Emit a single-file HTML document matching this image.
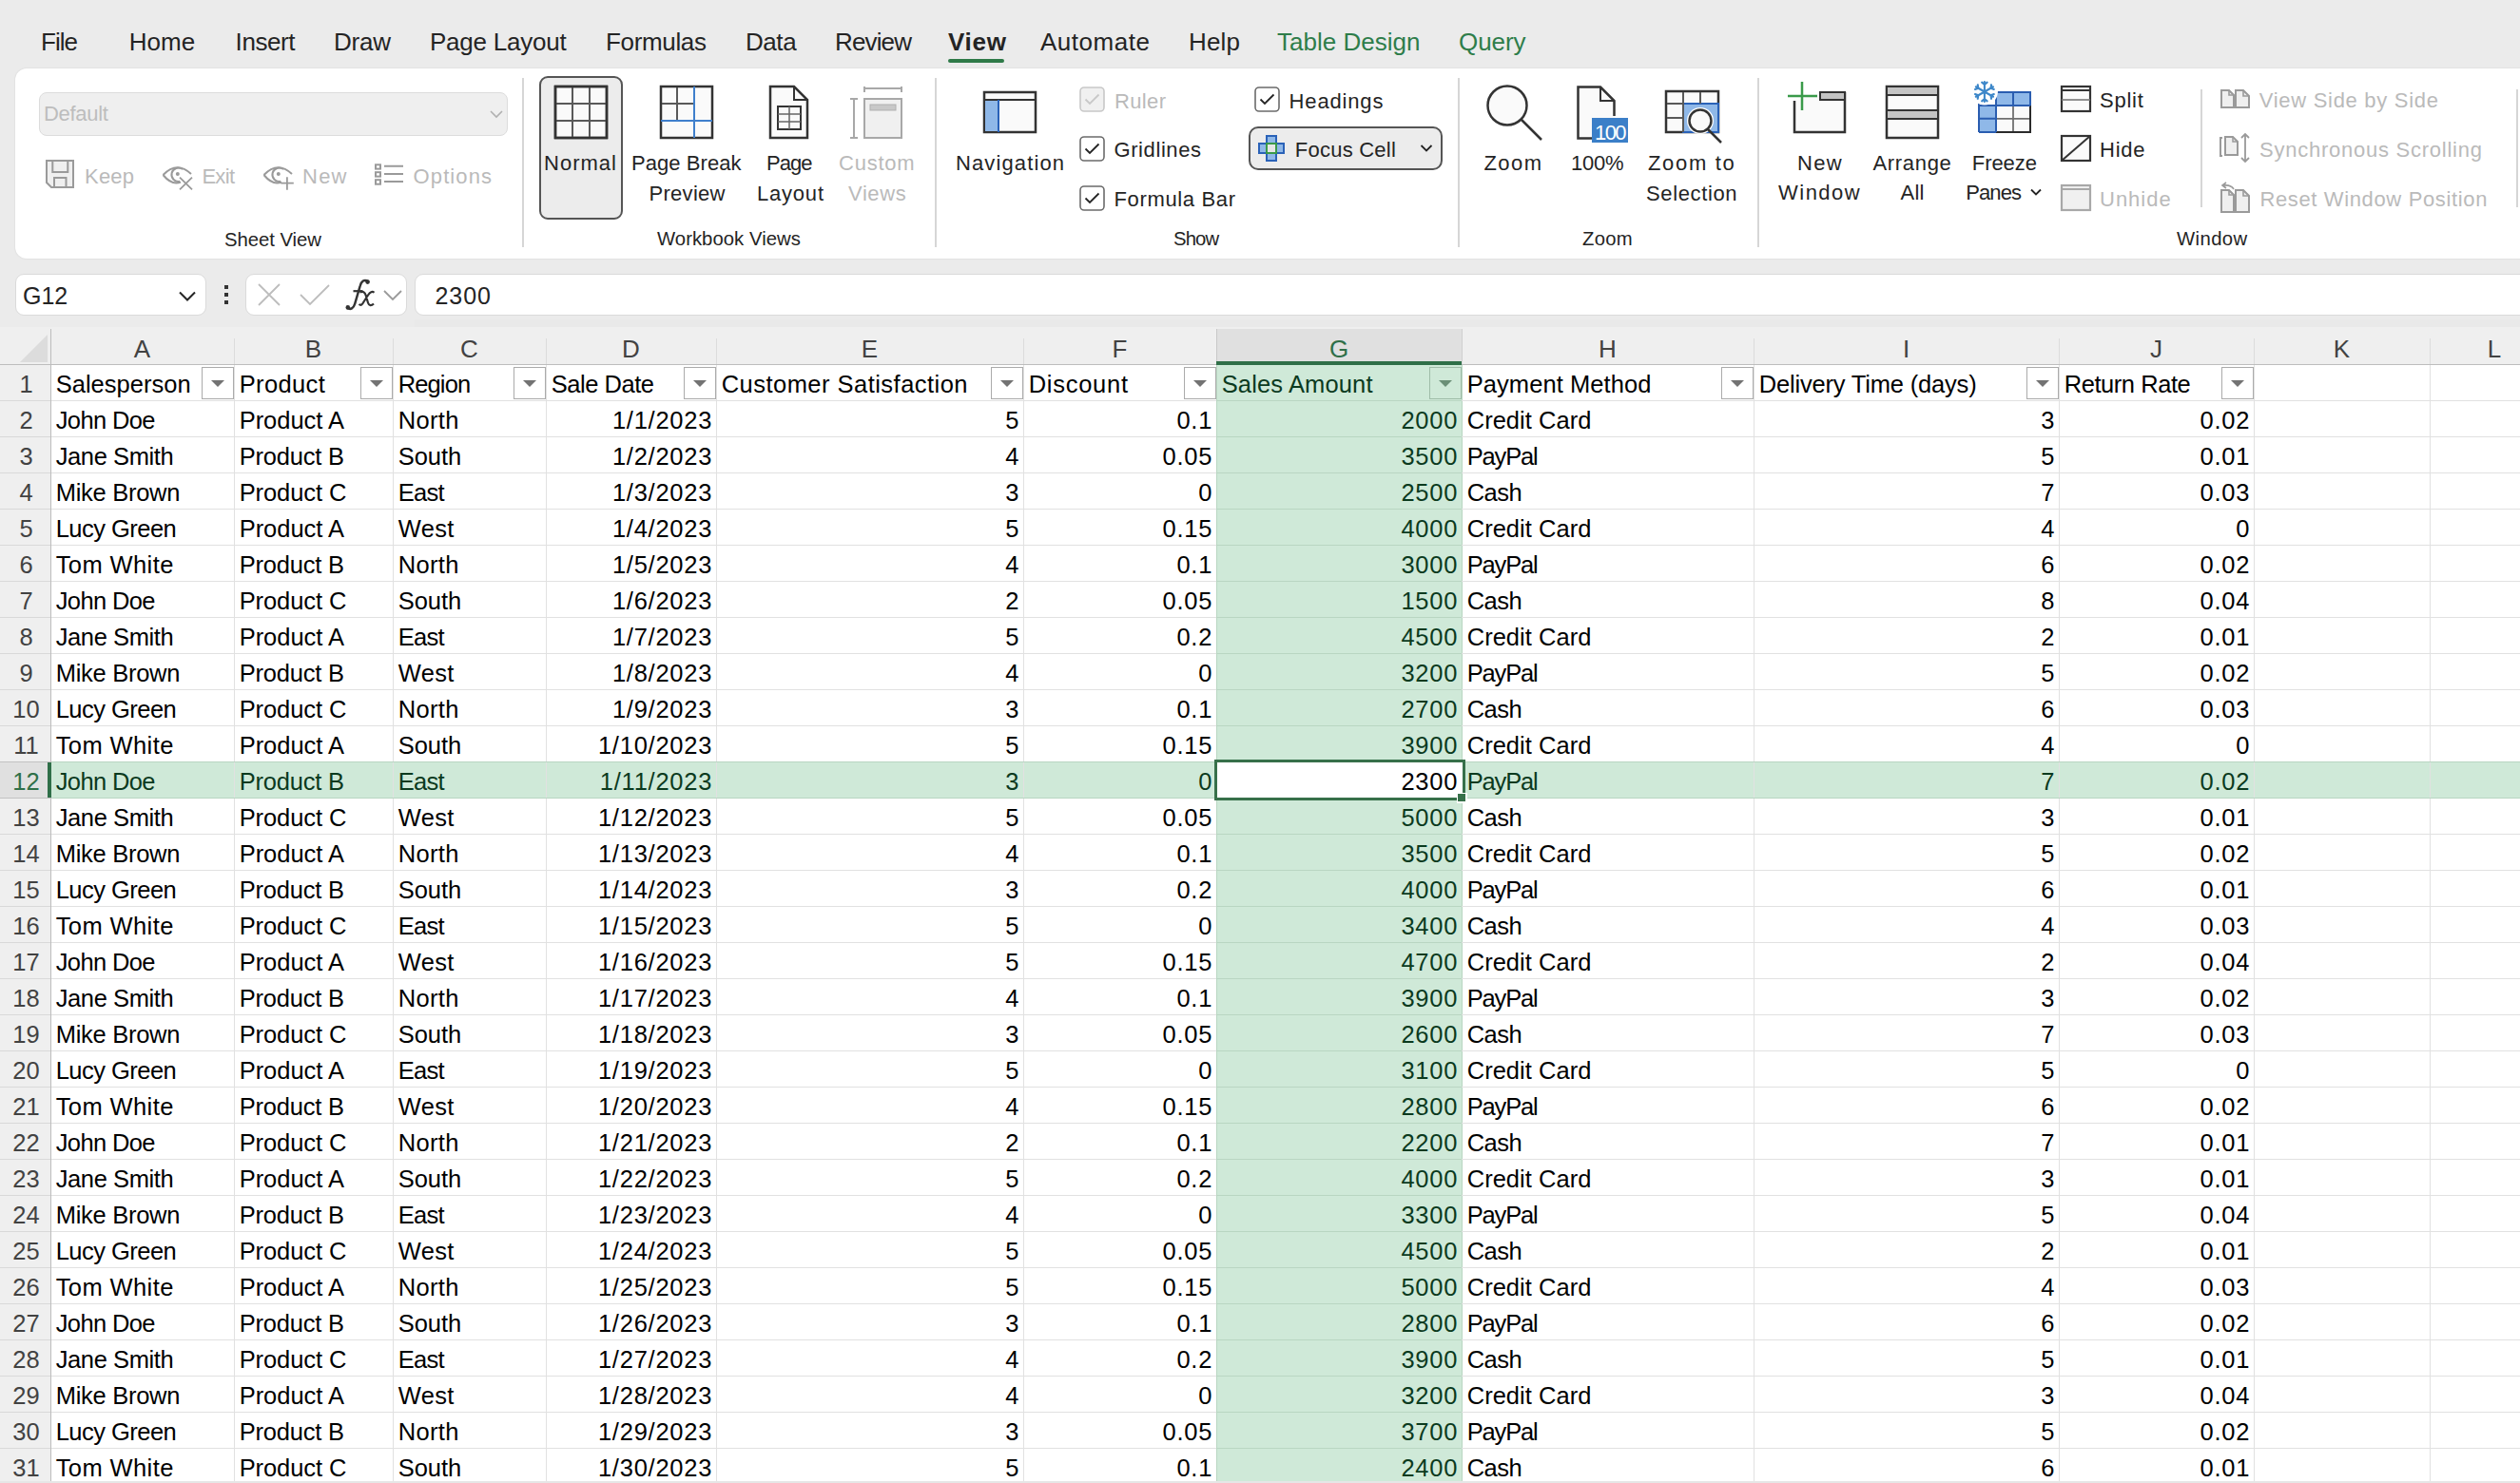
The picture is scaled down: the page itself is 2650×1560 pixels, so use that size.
<!DOCTYPE html>
<html><head><meta charset="utf-8"><style>
html,body{margin:0;padding:0;}
body{width:2650px;height:1560px;overflow:hidden;position:relative;background:#ebebeb;font-family:"Liberation Sans",sans-serif;}
.t{position:absolute;white-space:nowrap;line-height:1;}
svg{overflow:visible;}
</style></head><body>
<div class="t" style="left:43.00px;top:31.03px;font-size:26px;color:#242424;letter-spacing:-0.966px;">File</div><div class="t" style="left:135.70px;top:31.03px;font-size:26px;color:#242424;letter-spacing:0.081px;">Home</div><div class="t" style="left:247.60px;top:31.03px;font-size:26px;color:#242424;letter-spacing:-0.405px;">Insert</div><div class="t" style="left:351.00px;top:31.03px;font-size:26px;color:#242424;letter-spacing:-0.224px;">Draw</div><div class="t" style="left:452.00px;top:31.03px;font-size:26px;color:#242424;letter-spacing:-0.241px;">Page Layout</div><div class="t" style="left:637.00px;top:31.03px;font-size:26px;color:#242424;letter-spacing:-0.337px;">Formulas</div><div class="t" style="left:784.00px;top:31.03px;font-size:26px;color:#242424;letter-spacing:-0.440px;">Data</div><div class="t" style="left:878.00px;top:31.03px;font-size:26px;color:#242424;letter-spacing:-0.850px;">Review</div><div class="t" style="left:997.00px;top:31.03px;font-size:26px;color:#242424;letter-spacing:0.704px;font-weight:bold;">View</div><div class="t" style="left:1094.00px;top:31.03px;font-size:26px;color:#242424;letter-spacing:0.530px;">Automate</div><div class="t" style="left:1250.00px;top:31.03px;font-size:26px;color:#242424;letter-spacing:0.175px;">Help</div><div class="t" style="left:1343.00px;top:31.03px;font-size:26px;color:#2e7d4a;letter-spacing:0.017px;">Table Design</div><div class="t" style="left:1534.00px;top:31.03px;font-size:26px;color:#2e7d4a;letter-spacing:-0.076px;">Query</div><div style="position:absolute;left:997px;top:62px;width:59px;height:4px;background:#2f7a48;border-radius:2px;"></div><div style="position:absolute;left:16px;top:72px;width:2700px;height:200px;background:#fff;border-radius:12px;box-shadow:0 0 2px rgba(0,0,0,0.12);"></div><div style="position:absolute;left:549px;top:82px;width:2px;height:178px;background:#d6d6d6;"></div><div style="position:absolute;left:983px;top:82px;width:2px;height:178px;background:#d6d6d6;"></div><div style="position:absolute;left:1533px;top:82px;width:2px;height:178px;background:#d6d6d6;"></div><div style="position:absolute;left:1848px;top:82px;width:2px;height:178px;background:#d6d6d6;"></div><div style="position:absolute;left:2646px;top:94px;width:2px;height:124px;background:#d6d6d6;"></div><div style="position:absolute;left:2314px;top:94px;width:2px;height:124px;background:#d6d6d6;"></div><div class="t" style="left:236.00px;top:241.85px;font-size:20.3px;color:#242424;letter-spacing:-0.036px;">Sheet View</div><div class="t" style="left:691.00px;top:240.85px;font-size:20.3px;color:#242424;letter-spacing:0.043px;">Workbook Views</div><div class="t" style="left:1234.00px;top:240.85px;font-size:20.3px;color:#242424;letter-spacing:-0.861px;">Show</div><div class="t" style="left:1664.00px;top:241.25px;font-size:20.3px;color:#242424;letter-spacing:0.269px;">Zoom</div><div class="t" style="left:2289.00px;top:241.15px;font-size:20.3px;color:#242424;letter-spacing:0.400px;">Window</div><div style="position:absolute;left:41px;top:97px;width:493px;height:46px;background:#efefef;border:1px solid #dcdcdc;border-radius:8px;box-sizing:border-box;"></div><div class="t" style="left:46.00px;top:109.41px;font-size:22px;color:#bdbdbd;letter-spacing:-0.290px;">Default</div><svg style="position:absolute;left:514px;top:114px;" width="16" height="12" viewBox="0 0 16 12"><path d="M2 3 L8 9 L14 3" fill="none" stroke="#b0b0b0" stroke-width="1.6"/></svg><svg style="position:absolute;left:46px;top:166px;" width="34" height="34" viewBox="0 0 34 34"><path d="M3 3 H31 V31 H8 L3 26 Z" fill="#efefef" stroke="#9a9a9a" stroke-width="2"/><rect x="9.3" y="3" width="16" height="12" fill="none" stroke="#9a9a9a" stroke-width="2"/><rect x="11" y="21" width="12.5" height="10" fill="none" stroke="#9a9a9a" stroke-width="2"/></svg><div class="t" style="left:89.00px;top:175.01px;font-size:22px;color:#bababa;letter-spacing:0.206px;">Keep</div><svg style="position:absolute;left:170px;top:168px;" width="34" height="32" viewBox="0 0 34 32"><path d="M1.5 16 Q16 1 31 15" fill="none" stroke="#9a9a9a" stroke-width="2"/><path d="M1.5 16 Q11 27.5 20 23.5" fill="none" stroke="#9a9a9a" stroke-width="2"/><path d="M22 10 A7.2 7.2 0 1 0 19 22.8" fill="none" stroke="#9a9a9a" stroke-width="2"/><circle cx="16.8" cy="15" r="2" fill="#9a9a9a"/><path d="M19 18.6 L32 31.3 M32 18.6 L19 31.3" stroke="#9a9a9a" stroke-width="1.8"/></svg><div class="t" style="left:212.40px;top:175.01px;font-size:22px;color:#bababa;letter-spacing:-0.692px;">Exit</div><svg style="position:absolute;left:276px;top:168px;" width="34" height="32" viewBox="0 0 34 32"><path d="M1.5 16 Q16 1 31 15" fill="none" stroke="#9a9a9a" stroke-width="2"/><path d="M1.5 16 Q11 27.5 20 23.5" fill="none" stroke="#9a9a9a" stroke-width="2"/><path d="M22 10 A7.2 7.2 0 1 0 19 22.8" fill="none" stroke="#9a9a9a" stroke-width="2"/><circle cx="16.8" cy="15" r="2" fill="#9a9a9a"/><path d="M25.9 18.2 V31.7 M19.3 24.7 H32.8" stroke="#9a9a9a" stroke-width="1.8"/></svg><div class="t" style="left:318.00px;top:175.01px;font-size:22px;color:#bababa;letter-spacing:1.244px;">New</div><svg style="position:absolute;left:393px;top:170px;" width="34" height="28" viewBox="0 0 34 28"><rect x="2" y="3.3" width="5" height="4.3" fill="none" stroke="#9a9a9a" stroke-width="2"/><rect x="2" y="11.2" width="5" height="4.4" fill="none" stroke="#9a9a9a" stroke-width="2"/><rect x="2" y="19.2" width="5" height="4.5" fill="none" stroke="#9a9a9a" stroke-width="2"/><path d="M11 4.8 H31 M11 13 H31 M11 21 H31" stroke="#9a9a9a" stroke-width="2"/></svg><div class="t" style="left:434.60px;top:175.01px;font-size:22px;color:#bababa;letter-spacing:1.097px;">Options</div><div style="position:absolute;left:567px;top:80px;width:88px;height:151px;background:#ececec;border:2px solid #555;border-radius:9px;box-sizing:border-box;"></div><svg style="position:absolute;left:582px;top:89px;" width="58" height="58" viewBox="0 0 58 58"><rect x="2" y="2" width="54" height="54" fill="#fafafa" stroke="#333" stroke-width="2.5"/><path d="M20 3 V55 M38 3 V55 M3 20 H55 M3 38 H55" stroke="#595959" stroke-width="2"/><rect x="2" y="2" width="54" height="54" fill="none" stroke="#333" stroke-width="2.5"/></svg><div class="t" style="left:572.00px;top:160.91px;font-size:22px;color:#242424;letter-spacing:1.020px;">Normal</div><svg style="position:absolute;left:693px;top:89px;" width="58" height="58" viewBox="0 0 58 58"><rect x="2" y="2" width="54" height="54" fill="#fafafa" stroke="#333" stroke-width="2.5"/><path d="M19 3 V38 M3 20 H37" stroke="#595959" stroke-width="2"/><path d="M37 2 V56 M2 38 H56" stroke="#3f7fcc" stroke-width="2"/></svg><div class="t" style="left:664.00px;top:160.91px;font-size:22px;color:#242424;letter-spacing:0.059px;">Page Break</div><div class="t" style="left:682.50px;top:193.01px;font-size:22px;color:#242424;letter-spacing:0.292px;">Preview</div><svg style="position:absolute;left:808px;top:89px;" width="44" height="58" viewBox="0 0 44 58"><path d="M2 2 H27 L41 16 V56 H2 Z" fill="#fafafa" stroke="#333" stroke-width="2.5"/><path d="M27 2 V16 H41" fill="none" stroke="#333" stroke-width="2"/><rect x="10" y="23" width="24" height="24" fill="none" stroke="#333" stroke-width="2"/><path d="M22 23 V47 M10 31 H34 M10 39 H34" stroke="#666" stroke-width="1.5"/></svg><div class="t" style="left:806.00px;top:160.91px;font-size:22px;color:#242424;letter-spacing:-0.961px;">Page</div><div class="t" style="left:796.00px;top:193.01px;font-size:22px;color:#242424;letter-spacing:0.789px;">Layout</div><svg style="position:absolute;left:892px;top:89px;" width="60" height="58" viewBox="0 0 60 58"><path d="M17 2 V8 M17 4 H56 M56 2 V8" stroke="#a8a8a8" stroke-width="2"/><path d="M2 15 H10 M6 15 V56 M2 56 H10" stroke="#a8a8a8" stroke-width="2"/><rect x="17" y="15" width="39" height="41" fill="#f0f0f0" stroke="#a8a8a8" stroke-width="2"/><rect x="23" y="21" width="27" height="6" fill="#c8c8c8" stroke="#b0b0b0" stroke-width="1"/></svg><div class="t" style="left:882.00px;top:160.91px;font-size:22px;color:#bababa;letter-spacing:0.760px;">Custom</div><div class="t" style="left:892.00px;top:193.01px;font-size:22px;color:#bababa;letter-spacing:0.603px;">Views</div><svg style="position:absolute;left:1033px;top:95px;" width="58" height="46" viewBox="0 0 58 46"><rect x="2" y="2" width="54" height="42" fill="#fafafa" stroke="#333" stroke-width="2.5"/><rect x="3" y="10" width="14" height="33" fill="#8fb8e8"/><path d="M2 10 H56" stroke="#333" stroke-width="2"/><path d="M17 10 V44" stroke="#2a62b8" stroke-width="2"/></svg><div class="t" style="left:1005.00px;top:160.81px;font-size:22px;color:#242424;letter-spacing:1.116px;">Navigation</div><svg style="position:absolute;left:1134.5px;top:90.5px;" width="27" height="27" viewBox="0 0 27 27"><rect x="1" y="1" width="25" height="25" rx="4" fill="#f0f0f0" stroke="#c8c8c8" stroke-width="1.6"/><path d="M6.5 13.5 L11 18 L20.5 8.5" fill="none" stroke="#c8c8c8" stroke-width="1.8"/></svg><div class="t" style="left:1172.00px;top:95.91px;font-size:22px;color:#bababa;letter-spacing:0.356px;">Ruler</div><svg style="position:absolute;left:1134.5px;top:142.5px;" width="27" height="27" viewBox="0 0 27 27"><rect x="1" y="1" width="25" height="25" rx="4" fill="#fff" stroke="#6b6b6b" stroke-width="1.6"/><path d="M6.5 13.5 L11 18 L20.5 8.5" fill="none" stroke="#242424" stroke-width="1.8"/></svg><div class="t" style="left:1171.50px;top:147.11px;font-size:22px;color:#242424;letter-spacing:0.586px;">Gridlines</div><svg style="position:absolute;left:1134.5px;top:195px;" width="27" height="27" viewBox="0 0 27 27"><rect x="1" y="1" width="25" height="25" rx="4" fill="#fff" stroke="#6b6b6b" stroke-width="1.6"/><path d="M6.5 13.5 L11 18 L20.5 8.5" fill="none" stroke="#242424" stroke-width="1.8"/></svg><div class="t" style="left:1171.50px;top:199.41px;font-size:22px;color:#242424;letter-spacing:0.646px;">Formula Bar</div><svg style="position:absolute;left:1318.5px;top:90.5px;" width="27" height="27" viewBox="0 0 27 27"><rect x="1" y="1" width="25" height="25" rx="4" fill="#fff" stroke="#6b6b6b" stroke-width="1.6"/><path d="M6.5 13.5 L11 18 L20.5 8.5" fill="none" stroke="#242424" stroke-width="1.8"/></svg><div class="t" style="left:1355.60px;top:95.91px;font-size:22px;color:#242424;letter-spacing:0.835px;">Headings</div><div style="position:absolute;left:1313px;top:133px;width:204px;height:46px;background:#ececec;border:2px solid #555;border-radius:10px;box-sizing:border-box;"></div><svg style="position:absolute;left:1322px;top:141px;" width="30" height="30" viewBox="0 0 30 30"><path d="M10 2 H20 V10 H28 V20 H20 V28 H10 V20 H2 V10 H10 Z" fill="#8fb8e8" stroke="#2a62b8" stroke-width="2"/><rect x="10" y="10" width="10" height="10" fill="#e6e6e6" stroke="#3a9a4a" stroke-width="2"/></svg><div class="t" style="left:1361.80px;top:147.11px;font-size:22px;color:#242424;letter-spacing:0.231px;">Focus Cell</div><svg style="position:absolute;left:1492px;top:150px;" width="16" height="12" viewBox="0 0 16 12"><path d="M2.5 3 L8 8.5 L13.5 3" fill="none" stroke="#242424" stroke-width="1.8"/></svg><svg style="position:absolute;left:1560px;top:86px;" width="66" height="66" viewBox="0 0 66 66"><circle cx="25" cy="25" r="20.5" fill="#fafafa" stroke="#333" stroke-width="2.5"/><path d="M40 40 L61 61" stroke="#333" stroke-width="2.5"/></svg><div class="t" style="left:1560.50px;top:161.21px;font-size:22px;color:#242424;letter-spacing:1.421px;">Zoom</div><svg style="position:absolute;left:1656px;top:88px;" width="60" height="64" viewBox="0 0 60 64"><path d="M3 3 H27 L42 18 V58 H3 Z" fill="#fafafa" stroke="none"/><path d="M19 57.5 H3.5 V3.5 H27 L41.5 18 V34" fill="none" stroke="#333" stroke-width="2.5"/><path d="M27 3 V18 H42" fill="none" stroke="#333" stroke-width="2"/><rect x="18" y="36" width="38" height="26" fill="#3b7fc8"/><text x="37" y="58.5" font-family="Liberation Sans" font-size="22" fill="#fff" text-anchor="middle" letter-spacing="-1.5">100</text></svg><div class="t" style="left:1652.00px;top:161.21px;font-size:22px;color:#242424;letter-spacing:-0.256px;">100%</div><svg style="position:absolute;left:1750px;top:94px;" width="66" height="58" viewBox="0 0 66 58"><rect x="2" y="2" width="55" height="43" fill="#fafafa" stroke="#333" stroke-width="2.5"/><rect x="20" y="15" width="37" height="30" fill="#8fb8e8" stroke="#2a62b8" stroke-width="2"/><path d="M20 3 V45 M38 3 V15 M3 15 H20 M3 30 H20" stroke="#595959" stroke-width="2"/><circle cx="38" cy="33" r="14" fill="#fff"/><circle cx="38" cy="33" r="11.5" fill="#fafafa" stroke="#333" stroke-width="2.5"/><path d="M46 42 L60 56" stroke="#333" stroke-width="2.5"/></svg><div class="t" style="left:1733.00px;top:161.21px;font-size:22px;color:#242424;letter-spacing:1.684px;">Zoom to</div><div class="t" style="left:1731.00px;top:193.11px;font-size:22px;color:#242424;letter-spacing:0.624px;">Selection</div><svg style="position:absolute;left:1878px;top:84px;" width="66" height="58" viewBox="0 0 66 58"><path d="M9 22 V55 H62 V14 H36" fill="#fafafa" stroke="#333" stroke-width="2.5"/><rect x="36" y="13" width="26" height="8" fill="#c4c4c4" stroke="#333" stroke-width="2"/><path d="M17 2 V32 M2 17 H33" stroke="#3a9a4a" stroke-width="2.5"/></svg><div class="t" style="left:1890.00px;top:160.81px;font-size:22px;color:#242424;letter-spacing:1.344px;">New</div><div class="t" style="left:1870.00px;top:192.41px;font-size:22px;color:#242424;letter-spacing:1.490px;">Window</div><svg style="position:absolute;left:1982px;top:89px;" width="58" height="58" viewBox="0 0 58 58"><rect x="2" y="2" width="54" height="54" fill="#fafafa" stroke="#333" stroke-width="2.5"/><rect x="3" y="3" width="52" height="8" fill="#c4c4c4"/><path d="M2 11 H56" stroke="#333" stroke-width="2"/><rect x="3" y="27" width="52" height="9" fill="#c4c4c4"/><path d="M2 27 H56 M2 36 H56" stroke="#333" stroke-width="2"/></svg><div class="t" style="left:1969.40px;top:160.81px;font-size:22px;color:#242424;letter-spacing:0.688px;">Arrange</div><div class="t" style="left:1998.60px;top:192.41px;font-size:22px;color:#242424;letter-spacing:0.175px;">All</div><svg style="position:absolute;left:2074px;top:85px;" width="64" height="58" viewBox="0 0 64 58"><rect x="7" y="12" width="54" height="42" fill="#fafafa"/><path d="M7 26 H25 V12 H61 V26 H25 V54 H7 Z" fill="#8fb8e8"/><path d="M43 26 V54 M25 39.8 H61" stroke="#707070" stroke-width="1.8"/><path d="M61 26 V54 H25" fill="none" stroke="#2b2b2b" stroke-width="2"/><path d="M7 54 V12 H61 V26 M7 26 H61 M25 12 V54 M43 12 V26 M7 39.8 H25 M7 54 H25" fill="none" stroke="#2a5db0" stroke-width="2"/><circle cx="12.9" cy="11.5" r="14" fill="#fff"/><path d="M12.90 11.50 L12.90 1.00 M12.90 3.94 L10.14 1.63 M12.90 3.94 L15.66 1.63 M12.90 11.50 L21.99 6.25 M19.45 7.72 L20.07 4.17 M19.45 7.72 L22.83 8.95 M12.90 11.50 L21.99 16.75 M19.45 15.28 L22.83 14.05 M19.45 15.28 L20.07 18.83 M12.90 11.50 L12.90 22.00 M12.90 19.06 L15.66 21.37 M12.90 19.06 L10.14 21.37 M12.90 11.50 L3.81 16.75 M6.35 15.28 L5.73 18.83 M6.35 15.28 L2.97 14.05 M12.90 11.50 L3.81 6.25 M6.35 7.72 L2.97 8.95 M6.35 7.72 L5.73 4.17" stroke="#3d87c9" stroke-width="2.1" stroke-linecap="round"/></svg><div class="t" style="left:2073.80px;top:160.81px;font-size:22px;color:#242424;letter-spacing:-0.075px;">Freeze</div><div class="t" style="left:2067.30px;top:192.41px;font-size:22px;color:#242424;letter-spacing:-0.921px;">Panes</div><svg style="position:absolute;left:2134px;top:197px;" width="14" height="11" viewBox="0 0 14 11"><path d="M2 2.5 L7 7.5 L12 2.5" fill="none" stroke="#242424" stroke-width="1.8"/></svg><svg style="position:absolute;left:2166px;top:89px;" width="34" height="30" viewBox="0 0 34 30"><rect x="2" y="2" width="30" height="26" fill="#fafafa" stroke="#333" stroke-width="2.2"/><path d="M2 6 H32" stroke="#333" stroke-width="2"/><path d="M2 16 H32" stroke="#777" stroke-width="1.6"/></svg><div class="t" style="left:2208.00px;top:95.21px;font-size:22px;color:#242424;letter-spacing:0.750px;">Split</div><svg style="position:absolute;left:2166px;top:141px;" width="34" height="30" viewBox="0 0 34 30"><rect x="2" y="2" width="30" height="26" fill="#fafafa" stroke="#333" stroke-width="2.2"/><path d="M2 28 L32 2" stroke="#333" stroke-width="2"/></svg><div class="t" style="left:2208.00px;top:146.91px;font-size:22px;color:#242424;letter-spacing:0.784px;">Hide</div><svg style="position:absolute;left:2166px;top:193px;" width="34" height="30" viewBox="0 0 34 30"><rect x="2" y="2" width="30" height="26" fill="#f0f0f0" stroke="#a8a8a8" stroke-width="2.2"/><path d="M2 6 H32" stroke="#a8a8a8" stroke-width="2"/></svg><div class="t" style="left:2208.00px;top:199.11px;font-size:22px;color:#bababa;letter-spacing:0.996px;">Unhide</div><svg style="position:absolute;left:2334px;top:93px;" width="34" height="22" viewBox="0 0 34 22"><path d="M2 2 H10 L15 7 V20 H2 Z M17 2 H25 L31 8 V20 H17 Z" fill="#efefef" stroke="#9a9a9a" stroke-width="2"/><path d="M10 2 V7 H15 M25 2 V8 H31" fill="none" stroke="#9a9a9a" stroke-width="1.6"/></svg><div class="t" style="left:2375.70px;top:95.31px;font-size:22px;color:#bababa;letter-spacing:0.711px;">View Side by Side</div><svg style="position:absolute;left:2334px;top:139px;" width="34" height="34" viewBox="0 0 34 34"><path d="M3 6 H1 V25 H3" fill="none" stroke="#9a9a9a" stroke-width="2"/><path d="M6 5 H14 L19 10 V24 H6 Z" fill="#efefef" stroke="#9a9a9a" stroke-width="2"/><path d="M14 5 V10 H19" fill="none" stroke="#9a9a9a" stroke-width="1.5"/><path d="M27 2 V31 M23 6 L27 2 L31 6 M23 27 L27 31 L31 27" fill="none" stroke="#9a9a9a" stroke-width="1.8"/></svg><div class="t" style="left:2376.00px;top:147.41px;font-size:22px;color:#bababa;letter-spacing:0.755px;">Synchronous Scrolling</div><svg style="position:absolute;left:2334px;top:191px;" width="34" height="34" viewBox="0 0 34 34"><path d="M2 9 H10 L15 14 V32 H2 Z M17 9 H25 L31 15 V32 H17 Z" fill="#efefef" stroke="#9a9a9a" stroke-width="2"/><path d="M10 9 V14 H15 M25 9 V15 H31" fill="none" stroke="#9a9a9a" stroke-width="1.6"/><path d="M15 8 Q12 3 4 4 M7 1 L3 4 L7 7" fill="none" stroke="#9a9a9a" stroke-width="1.6"/></svg><div class="t" style="left:2376.40px;top:198.81px;font-size:22px;color:#bababa;letter-spacing:0.639px;">Reset Window Position</div><div style="position:absolute;left:16px;top:288px;width:201px;height:44px;background:#fff;border:1px solid #dadada;border-radius:9px;box-sizing:border-box;"></div><div class="t" style="left:24.00px;top:298.88px;font-size:25px;color:#242424;">G12</div><svg style="position:absolute;left:186px;top:304px;" width="22" height="16" viewBox="0 0 22 16"><path d="M3 3.5 L11 11.5 L19 3.5" fill="none" stroke="#242424" stroke-width="2"/></svg><div style="position:absolute;left:236px;top:300px;width:4px;height:4px;background:#333;"></div><div style="position:absolute;left:236px;top:308px;width:4px;height:4px;background:#333;"></div><div style="position:absolute;left:236px;top:316px;width:4px;height:4px;background:#333;"></div><div style="position:absolute;left:258px;top:288px;width:170px;height:44px;background:#fff;border:1px solid #dadada;border-radius:9px;box-sizing:border-box;"></div><svg style="position:absolute;left:270px;top:297px;" width="26" height="26" viewBox="0 0 26 26"><path d="M2 2 L24 24 M24 2 L2 24" stroke="#bdbdbd" stroke-width="1.8"/></svg><svg style="position:absolute;left:314px;top:297px;" width="34" height="26" viewBox="0 0 34 26"><path d="M2 13 L12 23 L32 3" fill="none" stroke="#bdbdbd" stroke-width="1.8"/></svg><svg style="position:absolute;left:362px;top:292px;" width="34" height="36" viewBox="0 0 34 36"><path d="M25 3.8 C21 1.6 18 3.6 16.6 9 L11.2 27.5 C9.8 32.5 6.5 34 3.5 32" fill="none" stroke="#333" stroke-width="2.5"/><circle cx="24.6" cy="4.6" r="2.3" fill="#333"/><circle cx="3.8" cy="31.4" r="2.3" fill="#333"/><path d="M9.5 14.2 H19.5" stroke="#333" stroke-width="2.2"/><path d="M16.5 15.5 C19.5 14.2 21.8 15.2 22.8 19 L25 26.5 C26 29.8 28.5 30 31 27.5 M31.5 15.8 C29.5 14 27.2 15 25 18.5 L20.5 25.5 C19 28.3 17.5 29.8 15.5 28" fill="none" stroke="#333" stroke-width="2.2"/></svg><svg style="position:absolute;left:402px;top:303px;" width="22" height="15" viewBox="0 0 22 15"><path d="M2 3 L11 12 L20 3" fill="none" stroke="#9a9a9a" stroke-width="1.8"/></svg><div style="position:absolute;left:436px;top:288px;width:2300px;height:44px;background:#fff;border:1px solid #dadada;border-radius:9px;box-sizing:border-box;"></div><div class="t" style="left:457.50px;top:298.88px;font-size:25px;color:#242424;letter-spacing:0.961px;">2300</div><div style="position:absolute;left:53px;top:383px;width:2597px;height:1175px;background:#fff;"></div><div style="position:absolute;left:436px;top:336px;width:2650px;height:8px;background:#e9e9e9;"></div><div style="position:absolute;left:0px;top:344px;width:2650px;height:39px;background:#efefef;"></div><div style="position:absolute;left:0px;top:383px;width:53px;height:1175px;background:#efefef;"></div><svg style="position:absolute;left:21px;top:352px;" width="30" height="29" viewBox="0 0 30 29"><path d="M29 0 V29 H0 Z" fill="#dcdcdc"/></svg><div style="position:absolute;left:1279px;top:346px;width:258px;height:37px;background:#e0e0e0;"></div><div style="position:absolute;left:1279px;top:383px;width:259px;height:1175px;background:#cfe9d8;"></div><div style="position:absolute;left:53px;top:801px;width:2597px;height:38px;background:#cfe9d8;"></div><div style="position:absolute;left:0px;top:801px;width:53px;height:38px;background:#e0e0e0;"></div><div style="position:absolute;left:246px;top:356px;width:1px;height:27px;background:#dcdcdc;"></div><div style="position:absolute;left:246px;top:383px;width:1px;height:1175px;background:#e1e1e1;"></div><div style="position:absolute;left:413px;top:356px;width:1px;height:27px;background:#dcdcdc;"></div><div style="position:absolute;left:413px;top:383px;width:1px;height:1175px;background:#e1e1e1;"></div><div style="position:absolute;left:574px;top:356px;width:1px;height:27px;background:#dcdcdc;"></div><div style="position:absolute;left:574px;top:383px;width:1px;height:1175px;background:#e1e1e1;"></div><div style="position:absolute;left:753px;top:356px;width:1px;height:27px;background:#dcdcdc;"></div><div style="position:absolute;left:753px;top:383px;width:1px;height:1175px;background:#e1e1e1;"></div><div style="position:absolute;left:1076px;top:356px;width:1px;height:27px;background:#dcdcdc;"></div><div style="position:absolute;left:1076px;top:383px;width:1px;height:1175px;background:#e1e1e1;"></div><div style="position:absolute;left:1279px;top:356px;width:1px;height:27px;background:#dcdcdc;"></div><div style="position:absolute;left:1279px;top:383px;width:1px;height:1175px;background:#e1e1e1;"></div><div style="position:absolute;left:1537px;top:356px;width:1px;height:27px;background:#dcdcdc;"></div><div style="position:absolute;left:1537px;top:383px;width:1px;height:1175px;background:#e1e1e1;"></div><div style="position:absolute;left:1844px;top:356px;width:1px;height:27px;background:#dcdcdc;"></div><div style="position:absolute;left:1844px;top:383px;width:1px;height:1175px;background:#e1e1e1;"></div><div style="position:absolute;left:2165px;top:356px;width:1px;height:27px;background:#dcdcdc;"></div><div style="position:absolute;left:2165px;top:383px;width:1px;height:1175px;background:#e1e1e1;"></div><div style="position:absolute;left:2370px;top:356px;width:1px;height:27px;background:#dcdcdc;"></div><div style="position:absolute;left:2370px;top:383px;width:1px;height:1175px;background:#e1e1e1;"></div><div style="position:absolute;left:2555px;top:356px;width:1px;height:27px;background:#dcdcdc;"></div><div style="position:absolute;left:2555px;top:383px;width:1px;height:1175px;background:#e1e1e1;"></div><div style="position:absolute;left:1279px;top:383px;width:1px;height:1175px;background:#b9d6c2;"></div><div style="position:absolute;left:1537px;top:383px;width:1px;height:1175px;background:#b9d6c2;"></div><div style="position:absolute;left:0px;top:421px;width:53px;height:1px;background:#d9d9d9;"></div><div style="position:absolute;left:53px;top:421px;width:2597px;height:1px;background:#e1e1e1;"></div><div style="position:absolute;left:1279px;top:421px;width:258px;height:1px;background:#b9d6c2;"></div><div style="position:absolute;left:0px;top:459px;width:53px;height:1px;background:#d9d9d9;"></div><div style="position:absolute;left:53px;top:459px;width:2597px;height:1px;background:#e1e1e1;"></div><div style="position:absolute;left:1279px;top:459px;width:258px;height:1px;background:#b9d6c2;"></div><div style="position:absolute;left:0px;top:497px;width:53px;height:1px;background:#d9d9d9;"></div><div style="position:absolute;left:53px;top:497px;width:2597px;height:1px;background:#e1e1e1;"></div><div style="position:absolute;left:1279px;top:497px;width:258px;height:1px;background:#b9d6c2;"></div><div style="position:absolute;left:0px;top:535px;width:53px;height:1px;background:#d9d9d9;"></div><div style="position:absolute;left:53px;top:535px;width:2597px;height:1px;background:#e1e1e1;"></div><div style="position:absolute;left:1279px;top:535px;width:258px;height:1px;background:#b9d6c2;"></div><div style="position:absolute;left:0px;top:573px;width:53px;height:1px;background:#d9d9d9;"></div><div style="position:absolute;left:53px;top:573px;width:2597px;height:1px;background:#e1e1e1;"></div><div style="position:absolute;left:1279px;top:573px;width:258px;height:1px;background:#b9d6c2;"></div><div style="position:absolute;left:0px;top:611px;width:53px;height:1px;background:#d9d9d9;"></div><div style="position:absolute;left:53px;top:611px;width:2597px;height:1px;background:#e1e1e1;"></div><div style="position:absolute;left:1279px;top:611px;width:258px;height:1px;background:#b9d6c2;"></div><div style="position:absolute;left:0px;top:649px;width:53px;height:1px;background:#d9d9d9;"></div><div style="position:absolute;left:53px;top:649px;width:2597px;height:1px;background:#e1e1e1;"></div><div style="position:absolute;left:1279px;top:649px;width:258px;height:1px;background:#b9d6c2;"></div><div style="position:absolute;left:0px;top:687px;width:53px;height:1px;background:#d9d9d9;"></div><div style="position:absolute;left:53px;top:687px;width:2597px;height:1px;background:#e1e1e1;"></div><div style="position:absolute;left:1279px;top:687px;width:258px;height:1px;background:#b9d6c2;"></div><div style="position:absolute;left:0px;top:725px;width:53px;height:1px;background:#d9d9d9;"></div><div style="position:absolute;left:53px;top:725px;width:2597px;height:1px;background:#e1e1e1;"></div><div style="position:absolute;left:1279px;top:725px;width:258px;height:1px;background:#b9d6c2;"></div><div style="position:absolute;left:0px;top:763px;width:53px;height:1px;background:#d9d9d9;"></div><div style="position:absolute;left:53px;top:763px;width:2597px;height:1px;background:#e1e1e1;"></div><div style="position:absolute;left:1279px;top:763px;width:258px;height:1px;background:#b9d6c2;"></div><div style="position:absolute;left:0px;top:801px;width:53px;height:1px;background:#d9d9d9;"></div><div style="position:absolute;left:53px;top:801px;width:2597px;height:1px;background:#e1e1e1;"></div><div style="position:absolute;left:1279px;top:801px;width:258px;height:1px;background:#b9d6c2;"></div><div style="position:absolute;left:0px;top:839px;width:53px;height:1px;background:#d9d9d9;"></div><div style="position:absolute;left:53px;top:839px;width:2597px;height:1px;background:#e1e1e1;"></div><div style="position:absolute;left:1279px;top:839px;width:258px;height:1px;background:#b9d6c2;"></div><div style="position:absolute;left:0px;top:877px;width:53px;height:1px;background:#d9d9d9;"></div><div style="position:absolute;left:53px;top:877px;width:2597px;height:1px;background:#e1e1e1;"></div><div style="position:absolute;left:1279px;top:877px;width:258px;height:1px;background:#b9d6c2;"></div><div style="position:absolute;left:0px;top:915px;width:53px;height:1px;background:#d9d9d9;"></div><div style="position:absolute;left:53px;top:915px;width:2597px;height:1px;background:#e1e1e1;"></div><div style="position:absolute;left:1279px;top:915px;width:258px;height:1px;background:#b9d6c2;"></div><div style="position:absolute;left:0px;top:953px;width:53px;height:1px;background:#d9d9d9;"></div><div style="position:absolute;left:53px;top:953px;width:2597px;height:1px;background:#e1e1e1;"></div><div style="position:absolute;left:1279px;top:953px;width:258px;height:1px;background:#b9d6c2;"></div><div style="position:absolute;left:0px;top:991px;width:53px;height:1px;background:#d9d9d9;"></div><div style="position:absolute;left:53px;top:991px;width:2597px;height:1px;background:#e1e1e1;"></div><div style="position:absolute;left:1279px;top:991px;width:258px;height:1px;background:#b9d6c2;"></div><div style="position:absolute;left:0px;top:1029px;width:53px;height:1px;background:#d9d9d9;"></div><div style="position:absolute;left:53px;top:1029px;width:2597px;height:1px;background:#e1e1e1;"></div><div style="position:absolute;left:1279px;top:1029px;width:258px;height:1px;background:#b9d6c2;"></div><div style="position:absolute;left:0px;top:1067px;width:53px;height:1px;background:#d9d9d9;"></div><div style="position:absolute;left:53px;top:1067px;width:2597px;height:1px;background:#e1e1e1;"></div><div style="position:absolute;left:1279px;top:1067px;width:258px;height:1px;background:#b9d6c2;"></div><div style="position:absolute;left:0px;top:1105px;width:53px;height:1px;background:#d9d9d9;"></div><div style="position:absolute;left:53px;top:1105px;width:2597px;height:1px;background:#e1e1e1;"></div><div style="position:absolute;left:1279px;top:1105px;width:258px;height:1px;background:#b9d6c2;"></div><div style="position:absolute;left:0px;top:1143px;width:53px;height:1px;background:#d9d9d9;"></div><div style="position:absolute;left:53px;top:1143px;width:2597px;height:1px;background:#e1e1e1;"></div><div style="position:absolute;left:1279px;top:1143px;width:258px;height:1px;background:#b9d6c2;"></div><div style="position:absolute;left:0px;top:1181px;width:53px;height:1px;background:#d9d9d9;"></div><div style="position:absolute;left:53px;top:1181px;width:2597px;height:1px;background:#e1e1e1;"></div><div style="position:absolute;left:1279px;top:1181px;width:258px;height:1px;background:#b9d6c2;"></div><div style="position:absolute;left:0px;top:1219px;width:53px;height:1px;background:#d9d9d9;"></div><div style="position:absolute;left:53px;top:1219px;width:2597px;height:1px;background:#e1e1e1;"></div><div style="position:absolute;left:1279px;top:1219px;width:258px;height:1px;background:#b9d6c2;"></div><div style="position:absolute;left:0px;top:1257px;width:53px;height:1px;background:#d9d9d9;"></div><div style="position:absolute;left:53px;top:1257px;width:2597px;height:1px;background:#e1e1e1;"></div><div style="position:absolute;left:1279px;top:1257px;width:258px;height:1px;background:#b9d6c2;"></div><div style="position:absolute;left:0px;top:1295px;width:53px;height:1px;background:#d9d9d9;"></div><div style="position:absolute;left:53px;top:1295px;width:2597px;height:1px;background:#e1e1e1;"></div><div style="position:absolute;left:1279px;top:1295px;width:258px;height:1px;background:#b9d6c2;"></div><div style="position:absolute;left:0px;top:1333px;width:53px;height:1px;background:#d9d9d9;"></div><div style="position:absolute;left:53px;top:1333px;width:2597px;height:1px;background:#e1e1e1;"></div><div style="position:absolute;left:1279px;top:1333px;width:258px;height:1px;background:#b9d6c2;"></div><div style="position:absolute;left:0px;top:1371px;width:53px;height:1px;background:#d9d9d9;"></div><div style="position:absolute;left:53px;top:1371px;width:2597px;height:1px;background:#e1e1e1;"></div><div style="position:absolute;left:1279px;top:1371px;width:258px;height:1px;background:#b9d6c2;"></div><div style="position:absolute;left:0px;top:1409px;width:53px;height:1px;background:#d9d9d9;"></div><div style="position:absolute;left:53px;top:1409px;width:2597px;height:1px;background:#e1e1e1;"></div><div style="position:absolute;left:1279px;top:1409px;width:258px;height:1px;background:#b9d6c2;"></div><div style="position:absolute;left:0px;top:1447px;width:53px;height:1px;background:#d9d9d9;"></div><div style="position:absolute;left:53px;top:1447px;width:2597px;height:1px;background:#e1e1e1;"></div><div style="position:absolute;left:1279px;top:1447px;width:258px;height:1px;background:#b9d6c2;"></div><div style="position:absolute;left:0px;top:1485px;width:53px;height:1px;background:#d9d9d9;"></div><div style="position:absolute;left:53px;top:1485px;width:2597px;height:1px;background:#e1e1e1;"></div><div style="position:absolute;left:1279px;top:1485px;width:258px;height:1px;background:#b9d6c2;"></div><div style="position:absolute;left:0px;top:1523px;width:53px;height:1px;background:#d9d9d9;"></div><div style="position:absolute;left:53px;top:1523px;width:2597px;height:1px;background:#e1e1e1;"></div><div style="position:absolute;left:1279px;top:1523px;width:258px;height:1px;background:#b9d6c2;"></div><div style="position:absolute;left:0px;top:1561px;width:53px;height:1px;background:#d9d9d9;"></div><div style="position:absolute;left:53px;top:1561px;width:2597px;height:1px;background:#e1e1e1;"></div><div style="position:absolute;left:1279px;top:1561px;width:258px;height:1px;background:#b9d6c2;"></div><div style="position:absolute;left:53px;top:801px;width:2597px;height:1px;background:#b9d6c2;"></div><div style="position:absolute;left:53px;top:839px;width:2597px;height:1px;background:#b9d6c2;"></div><div style="position:absolute;left:0px;top:383px;width:2650px;height:1px;background:#bdbdbd;"></div><div style="position:absolute;left:53px;top:346px;width:1px;height:1212px;background:#bdbdbd;"></div><div style="position:absolute;left:0px;top:1558px;width:2650px;height:2px;background:#e6e6e6;"></div><div style="position:absolute;left:1279px;top:380px;width:258px;height:4px;background:#2f6f48;"></div><div style="position:absolute;left:1279px;top:346px;width:1px;height:34px;background:#c8c8c8;"></div><div style="position:absolute;left:1537px;top:346px;width:1px;height:34px;background:#d0d0d0;"></div><div style="position:absolute;left:0px;top:801px;width:53px;height:1px;background:#c2c2c2;"></div><div style="position:absolute;left:0px;top:839px;width:53px;height:1px;background:#c2c2c2;"></div><div style="position:absolute;left:50px;top:802px;width:4px;height:37px;background:#2f6f48;"></div><div class="t" style="left:140.83px;top:354.23px;font-size:26px;color:#424242;">A</div><div class="t" style="left:320.83px;top:354.23px;font-size:26px;color:#424242;">B</div><div class="t" style="left:484.11px;top:354.23px;font-size:26px;color:#424242;">C</div><div class="t" style="left:654.11px;top:354.23px;font-size:26px;color:#424242;">D</div><div class="t" style="left:905.83px;top:354.23px;font-size:26px;color:#424242;">E</div><div class="t" style="left:1169.56px;top:354.23px;font-size:26px;color:#424242;">F</div><div class="t" style="left:1397.89px;top:354.23px;font-size:26px;color:#2f6f48;">G</div><div class="t" style="left:1681.11px;top:354.23px;font-size:26px;color:#424242;">H</div><div class="t" style="left:2000.89px;top:354.23px;font-size:26px;color:#424242;">I</div><div class="t" style="left:2261.00px;top:354.23px;font-size:26px;color:#424242;">J</div><div class="t" style="left:2453.83px;top:354.23px;font-size:26px;color:#424242;">K</div><div class="t" style="left:2615.77px;top:354.23px;font-size:26px;color:#424242;">L</div><div class="t" style="left:20.41px;top:392.25px;font-size:25.5px;color:#424242;">1</div><div class="t" style="left:20.41px;top:430.25px;font-size:25.5px;color:#424242;">2</div><div class="t" style="left:20.41px;top:468.25px;font-size:25.5px;color:#424242;">3</div><div class="t" style="left:20.41px;top:506.25px;font-size:25.5px;color:#424242;">4</div><div class="t" style="left:20.41px;top:544.25px;font-size:25.5px;color:#424242;">5</div><div class="t" style="left:20.41px;top:582.25px;font-size:25.5px;color:#424242;">6</div><div class="t" style="left:20.41px;top:620.25px;font-size:25.5px;color:#424242;">7</div><div class="t" style="left:20.41px;top:658.25px;font-size:25.5px;color:#424242;">8</div><div class="t" style="left:20.41px;top:696.25px;font-size:25.5px;color:#424242;">9</div><div class="t" style="left:13.32px;top:734.25px;font-size:25.5px;color:#424242;">10</div><div class="t" style="left:14.26px;top:772.25px;font-size:25.5px;color:#424242;">11</div><div class="t" style="left:13.32px;top:810.25px;font-size:25.5px;color:#2f6f48;">12</div><div class="t" style="left:13.32px;top:848.25px;font-size:25.5px;color:#424242;">13</div><div class="t" style="left:13.32px;top:886.25px;font-size:25.5px;color:#424242;">14</div><div class="t" style="left:13.32px;top:924.25px;font-size:25.5px;color:#424242;">15</div><div class="t" style="left:13.32px;top:962.25px;font-size:25.5px;color:#424242;">16</div><div class="t" style="left:13.32px;top:1000.25px;font-size:25.5px;color:#424242;">17</div><div class="t" style="left:13.32px;top:1038.25px;font-size:25.5px;color:#424242;">18</div><div class="t" style="left:13.32px;top:1076.25px;font-size:25.5px;color:#424242;">19</div><div class="t" style="left:13.32px;top:1114.25px;font-size:25.5px;color:#424242;">20</div><div class="t" style="left:13.32px;top:1152.25px;font-size:25.5px;color:#424242;">21</div><div class="t" style="left:13.32px;top:1190.25px;font-size:25.5px;color:#424242;">22</div><div class="t" style="left:13.32px;top:1228.25px;font-size:25.5px;color:#424242;">23</div><div class="t" style="left:13.32px;top:1266.25px;font-size:25.5px;color:#424242;">24</div><div class="t" style="left:13.32px;top:1304.25px;font-size:25.5px;color:#424242;">25</div><div class="t" style="left:13.32px;top:1342.25px;font-size:25.5px;color:#424242;">26</div><div class="t" style="left:13.32px;top:1380.25px;font-size:25.5px;color:#424242;">27</div><div class="t" style="left:13.32px;top:1418.25px;font-size:25.5px;color:#424242;">28</div><div class="t" style="left:13.32px;top:1456.25px;font-size:25.5px;color:#424242;">29</div><div class="t" style="left:13.32px;top:1494.25px;font-size:25.5px;color:#424242;">30</div><div class="t" style="left:13.32px;top:1532.25px;font-size:25.5px;color:#424242;">31</div><div class="t" style="left:58.70px;top:392.25px;font-size:25.5px;color:#000;letter-spacing:0.012px;">Salesperson</div><div style="position:absolute;left:212px;top:386px;width:34px;height:34px;background:#fff;border:1.5px solid #ababab;box-sizing:border-box;"></div><svg style="position:absolute;left:222px;top:400px;" width="14" height="8" viewBox="0 0 14 8"><path d="M0 0 H14 L7 7 Z" fill="#737373"/></svg><div class="t" style="left:251.70px;top:392.25px;font-size:25.5px;color:#000;letter-spacing:0.359px;">Product</div><div style="position:absolute;left:379px;top:386px;width:34px;height:34px;background:#fff;border:1.5px solid #ababab;box-sizing:border-box;"></div><svg style="position:absolute;left:389px;top:400px;" width="14" height="8" viewBox="0 0 14 8"><path d="M0 0 H14 L7 7 Z" fill="#737373"/></svg><div class="t" style="left:418.70px;top:392.25px;font-size:25.5px;color:#000;letter-spacing:-0.867px;">Region</div><div style="position:absolute;left:540px;top:386px;width:34px;height:34px;background:#fff;border:1.5px solid #ababab;box-sizing:border-box;"></div><svg style="position:absolute;left:550px;top:400px;" width="14" height="8" viewBox="0 0 14 8"><path d="M0 0 H14 L7 7 Z" fill="#737373"/></svg><div class="t" style="left:579.70px;top:392.25px;font-size:25.5px;color:#000;letter-spacing:-0.468px;">Sale Date</div><div style="position:absolute;left:719px;top:386px;width:34px;height:34px;background:#fff;border:1.5px solid #ababab;box-sizing:border-box;"></div><svg style="position:absolute;left:729px;top:400px;" width="14" height="8" viewBox="0 0 14 8"><path d="M0 0 H14 L7 7 Z" fill="#737373"/></svg><div class="t" style="left:758.70px;top:392.25px;font-size:25.5px;color:#000;letter-spacing:0.471px;">Customer Satisfaction</div><div style="position:absolute;left:1042px;top:386px;width:34px;height:34px;background:#fff;border:1.5px solid #ababab;box-sizing:border-box;"></div><svg style="position:absolute;left:1052px;top:400px;" width="14" height="8" viewBox="0 0 14 8"><path d="M0 0 H14 L7 7 Z" fill="#737373"/></svg><div class="t" style="left:1081.70px;top:392.25px;font-size:25.5px;color:#000;letter-spacing:0.729px;">Discount</div><div style="position:absolute;left:1245px;top:386px;width:34px;height:34px;background:#fff;border:1.5px solid #ababab;box-sizing:border-box;"></div><svg style="position:absolute;left:1255px;top:400px;" width="14" height="8" viewBox="0 0 14 8"><path d="M0 0 H14 L7 7 Z" fill="#737373"/></svg><div class="t" style="left:1284.70px;top:392.25px;font-size:25.5px;color:#0b3a1e;letter-spacing:0.133px;">Sales Amount</div><div style="position:absolute;left:1503px;top:386px;width:34px;height:34px;background:#cfe9d8;border:1.5px solid #9fbca8;box-sizing:border-box;"></div><svg style="position:absolute;left:1513px;top:400px;" width="14" height="8" viewBox="0 0 14 8"><path d="M0 0 H14 L7 7 Z" fill="#6b8f77"/></svg><div class="t" style="left:1542.70px;top:392.25px;font-size:25.5px;color:#000;letter-spacing:0.078px;">Payment Method</div><div style="position:absolute;left:1810px;top:386px;width:34px;height:34px;background:#fff;border:1.5px solid #ababab;box-sizing:border-box;"></div><svg style="position:absolute;left:1820px;top:400px;" width="14" height="8" viewBox="0 0 14 8"><path d="M0 0 H14 L7 7 Z" fill="#737373"/></svg><div class="t" style="left:1849.70px;top:392.25px;font-size:25.5px;color:#000;letter-spacing:-0.181px;">Delivery Time (days)</div><div style="position:absolute;left:2131px;top:386px;width:34px;height:34px;background:#fff;border:1.5px solid #ababab;box-sizing:border-box;"></div><svg style="position:absolute;left:2141px;top:400px;" width="14" height="8" viewBox="0 0 14 8"><path d="M0 0 H14 L7 7 Z" fill="#737373"/></svg><div class="t" style="left:2170.70px;top:392.25px;font-size:25.5px;color:#000;letter-spacing:-0.444px;">Return Rate</div><div style="position:absolute;left:2336px;top:386px;width:34px;height:34px;background:#fff;border:1.5px solid #ababab;box-sizing:border-box;"></div><svg style="position:absolute;left:2346px;top:400px;" width="14" height="8" viewBox="0 0 14 8"><path d="M0 0 H14 L7 7 Z" fill="#737373"/></svg><div class="t" style="left:58.70px;top:430.25px;font-size:25.5px;color:#000;letter-spacing:-0.620px;">John Doe</div><div class="t" style="left:251.70px;top:430.25px;font-size:25.5px;color:#000;letter-spacing:-0.034px;">Product A</div><div class="t" style="left:418.70px;top:430.25px;font-size:25.5px;color:#000;letter-spacing:0.338px;">North</div><div class="t" style="left:643.89px;top:430.25px;font-size:25.5px;color:#000;letter-spacing:0.750px;">1/1/2023</div><div class="t" style="left:1057.22px;top:430.25px;font-size:25.5px;color:#000;">5</div><div class="t" style="left:1237.45px;top:430.25px;font-size:25.5px;color:#000;letter-spacing:0.750px;">0.1</div><div class="t" style="left:1473.42px;top:430.25px;font-size:25.5px;color:#0b3a1e;letter-spacing:0.750px;">2000</div><div class="t" style="left:1542.70px;top:430.25px;font-size:25.5px;color:#000;letter-spacing:0.027px;">Credit Card</div><div class="t" style="left:2146.22px;top:430.25px;font-size:25.5px;color:#000;">3</div><div class="t" style="left:2313.52px;top:430.25px;font-size:25.5px;color:#000;letter-spacing:0.750px;">0.02</div><div class="t" style="left:58.70px;top:468.25px;font-size:25.5px;color:#000;letter-spacing:-0.392px;">Jane Smith</div><div class="t" style="left:251.70px;top:468.25px;font-size:25.5px;color:#000;letter-spacing:-0.193px;">Product B</div><div class="t" style="left:418.70px;top:468.25px;font-size:25.5px;color:#000;letter-spacing:-0.046px;">South</div><div class="t" style="left:643.89px;top:468.25px;font-size:25.5px;color:#000;letter-spacing:0.750px;">1/2/2023</div><div class="t" style="left:1057.22px;top:468.25px;font-size:25.5px;color:#000;">4</div><div class="t" style="left:1222.52px;top:468.25px;font-size:25.5px;color:#000;letter-spacing:0.750px;">0.05</div><div class="t" style="left:1473.42px;top:468.25px;font-size:25.5px;color:#0b3a1e;letter-spacing:0.750px;">3500</div><div class="t" style="left:1542.70px;top:468.25px;font-size:25.5px;color:#000;letter-spacing:-1.167px;">PayPal</div><div class="t" style="left:2146.22px;top:468.25px;font-size:25.5px;color:#000;">5</div><div class="t" style="left:2313.52px;top:468.25px;font-size:25.5px;color:#000;letter-spacing:0.750px;">0.01</div><div class="t" style="left:58.70px;top:506.25px;font-size:25.5px;color:#000;letter-spacing:-0.282px;">Mike Brown</div><div class="t" style="left:251.70px;top:506.25px;font-size:25.5px;color:#000;letter-spacing:-0.093px;">Product C</div><div class="t" style="left:418.70px;top:506.25px;font-size:25.5px;color:#000;letter-spacing:-0.700px;">East</div><div class="t" style="left:643.89px;top:506.25px;font-size:25.5px;color:#000;letter-spacing:0.750px;">1/3/2023</div><div class="t" style="left:1057.22px;top:506.25px;font-size:25.5px;color:#000;">3</div><div class="t" style="left:1260.22px;top:506.25px;font-size:25.5px;color:#000;">0</div><div class="t" style="left:1473.42px;top:506.25px;font-size:25.5px;color:#0b3a1e;letter-spacing:0.750px;">2500</div><div class="t" style="left:1542.70px;top:506.25px;font-size:25.5px;color:#000;letter-spacing:-0.514px;">Cash</div><div class="t" style="left:2146.22px;top:506.25px;font-size:25.5px;color:#000;">7</div><div class="t" style="left:2313.52px;top:506.25px;font-size:25.5px;color:#000;letter-spacing:0.750px;">0.03</div><div class="t" style="left:58.70px;top:544.25px;font-size:25.5px;color:#000;letter-spacing:-0.526px;">Lucy Green</div><div class="t" style="left:251.70px;top:544.25px;font-size:25.5px;color:#000;letter-spacing:-0.034px;">Product A</div><div class="t" style="left:418.70px;top:544.25px;font-size:25.5px;color:#000;letter-spacing:0.357px;">West</div><div class="t" style="left:643.89px;top:544.25px;font-size:25.5px;color:#000;letter-spacing:0.750px;">1/4/2023</div><div class="t" style="left:1057.22px;top:544.25px;font-size:25.5px;color:#000;">5</div><div class="t" style="left:1222.52px;top:544.25px;font-size:25.5px;color:#000;letter-spacing:0.750px;">0.15</div><div class="t" style="left:1473.42px;top:544.25px;font-size:25.5px;color:#0b3a1e;letter-spacing:0.750px;">4000</div><div class="t" style="left:1542.70px;top:544.25px;font-size:25.5px;color:#000;letter-spacing:0.027px;">Credit Card</div><div class="t" style="left:2146.22px;top:544.25px;font-size:25.5px;color:#000;">4</div><div class="t" style="left:2351.22px;top:544.25px;font-size:25.5px;color:#000;">0</div><div class="t" style="left:58.70px;top:582.25px;font-size:25.5px;color:#000;letter-spacing:0.402px;">Tom White</div><div class="t" style="left:251.70px;top:582.25px;font-size:25.5px;color:#000;letter-spacing:-0.193px;">Product B</div><div class="t" style="left:418.70px;top:582.25px;font-size:25.5px;color:#000;letter-spacing:0.338px;">North</div><div class="t" style="left:643.89px;top:582.25px;font-size:25.5px;color:#000;letter-spacing:0.750px;">1/5/2023</div><div class="t" style="left:1057.22px;top:582.25px;font-size:25.5px;color:#000;">4</div><div class="t" style="left:1237.45px;top:582.25px;font-size:25.5px;color:#000;letter-spacing:0.750px;">0.1</div><div class="t" style="left:1473.42px;top:582.25px;font-size:25.5px;color:#0b3a1e;letter-spacing:0.750px;">3000</div><div class="t" style="left:1542.70px;top:582.25px;font-size:25.5px;color:#000;letter-spacing:-1.167px;">PayPal</div><div class="t" style="left:2146.22px;top:582.25px;font-size:25.5px;color:#000;">6</div><div class="t" style="left:2313.52px;top:582.25px;font-size:25.5px;color:#000;letter-spacing:0.750px;">0.02</div><div class="t" style="left:58.70px;top:620.25px;font-size:25.5px;color:#000;letter-spacing:-0.620px;">John Doe</div><div class="t" style="left:251.70px;top:620.25px;font-size:25.5px;color:#000;letter-spacing:-0.093px;">Product C</div><div class="t" style="left:418.70px;top:620.25px;font-size:25.5px;color:#000;letter-spacing:-0.046px;">South</div><div class="t" style="left:643.89px;top:620.25px;font-size:25.5px;color:#000;letter-spacing:0.750px;">1/6/2023</div><div class="t" style="left:1057.22px;top:620.25px;font-size:25.5px;color:#000;">2</div><div class="t" style="left:1222.52px;top:620.25px;font-size:25.5px;color:#000;letter-spacing:0.750px;">0.05</div><div class="t" style="left:1473.42px;top:620.25px;font-size:25.5px;color:#0b3a1e;letter-spacing:0.750px;">1500</div><div class="t" style="left:1542.70px;top:620.25px;font-size:25.5px;color:#000;letter-spacing:-0.514px;">Cash</div><div class="t" style="left:2146.22px;top:620.25px;font-size:25.5px;color:#000;">8</div><div class="t" style="left:2313.52px;top:620.25px;font-size:25.5px;color:#000;letter-spacing:0.750px;">0.04</div><div class="t" style="left:58.70px;top:658.25px;font-size:25.5px;color:#000;letter-spacing:-0.392px;">Jane Smith</div><div class="t" style="left:251.70px;top:658.25px;font-size:25.5px;color:#000;letter-spacing:-0.034px;">Product A</div><div class="t" style="left:418.70px;top:658.25px;font-size:25.5px;color:#000;letter-spacing:-0.700px;">East</div><div class="t" style="left:643.89px;top:658.25px;font-size:25.5px;color:#000;letter-spacing:0.750px;">1/7/2023</div><div class="t" style="left:1057.22px;top:658.25px;font-size:25.5px;color:#000;">5</div><div class="t" style="left:1237.45px;top:658.25px;font-size:25.5px;color:#000;letter-spacing:0.750px;">0.2</div><div class="t" style="left:1473.42px;top:658.25px;font-size:25.5px;color:#0b3a1e;letter-spacing:0.750px;">4500</div><div class="t" style="left:1542.70px;top:658.25px;font-size:25.5px;color:#000;letter-spacing:0.027px;">Credit Card</div><div class="t" style="left:2146.22px;top:658.25px;font-size:25.5px;color:#000;">2</div><div class="t" style="left:2313.52px;top:658.25px;font-size:25.5px;color:#000;letter-spacing:0.750px;">0.01</div><div class="t" style="left:58.70px;top:696.25px;font-size:25.5px;color:#000;letter-spacing:-0.282px;">Mike Brown</div><div class="t" style="left:251.70px;top:696.25px;font-size:25.5px;color:#000;letter-spacing:-0.193px;">Product B</div><div class="t" style="left:418.70px;top:696.25px;font-size:25.5px;color:#000;letter-spacing:0.357px;">West</div><div class="t" style="left:643.89px;top:696.25px;font-size:25.5px;color:#000;letter-spacing:0.750px;">1/8/2023</div><div class="t" style="left:1057.22px;top:696.25px;font-size:25.5px;color:#000;">4</div><div class="t" style="left:1260.22px;top:696.25px;font-size:25.5px;color:#000;">0</div><div class="t" style="left:1473.42px;top:696.25px;font-size:25.5px;color:#0b3a1e;letter-spacing:0.750px;">3200</div><div class="t" style="left:1542.70px;top:696.25px;font-size:25.5px;color:#000;letter-spacing:-1.167px;">PayPal</div><div class="t" style="left:2146.22px;top:696.25px;font-size:25.5px;color:#000;">5</div><div class="t" style="left:2313.52px;top:696.25px;font-size:25.5px;color:#000;letter-spacing:0.750px;">0.02</div><div class="t" style="left:58.70px;top:734.25px;font-size:25.5px;color:#000;letter-spacing:-0.526px;">Lucy Green</div><div class="t" style="left:251.70px;top:734.25px;font-size:25.5px;color:#000;letter-spacing:-0.093px;">Product C</div><div class="t" style="left:418.70px;top:734.25px;font-size:25.5px;color:#000;letter-spacing:0.338px;">North</div><div class="t" style="left:643.89px;top:734.25px;font-size:25.5px;color:#000;letter-spacing:0.750px;">1/9/2023</div><div class="t" style="left:1057.22px;top:734.25px;font-size:25.5px;color:#000;">3</div><div class="t" style="left:1237.45px;top:734.25px;font-size:25.5px;color:#000;letter-spacing:0.750px;">0.1</div><div class="t" style="left:1473.42px;top:734.25px;font-size:25.5px;color:#0b3a1e;letter-spacing:0.750px;">2700</div><div class="t" style="left:1542.70px;top:734.25px;font-size:25.5px;color:#000;letter-spacing:-0.514px;">Cash</div><div class="t" style="left:2146.22px;top:734.25px;font-size:25.5px;color:#000;">6</div><div class="t" style="left:2313.52px;top:734.25px;font-size:25.5px;color:#000;letter-spacing:0.750px;">0.03</div><div class="t" style="left:58.70px;top:772.25px;font-size:25.5px;color:#000;letter-spacing:0.402px;">Tom White</div><div class="t" style="left:251.70px;top:772.25px;font-size:25.5px;color:#000;letter-spacing:-0.034px;">Product A</div><div class="t" style="left:418.70px;top:772.25px;font-size:25.5px;color:#000;letter-spacing:-0.046px;">South</div><div class="t" style="left:628.95px;top:772.25px;font-size:25.5px;color:#000;letter-spacing:0.750px;">1/10/2023</div><div class="t" style="left:1057.22px;top:772.25px;font-size:25.5px;color:#000;">5</div><div class="t" style="left:1222.52px;top:772.25px;font-size:25.5px;color:#000;letter-spacing:0.750px;">0.15</div><div class="t" style="left:1473.42px;top:772.25px;font-size:25.5px;color:#0b3a1e;letter-spacing:0.750px;">3900</div><div class="t" style="left:1542.70px;top:772.25px;font-size:25.5px;color:#000;letter-spacing:0.027px;">Credit Card</div><div class="t" style="left:2146.22px;top:772.25px;font-size:25.5px;color:#000;">4</div><div class="t" style="left:2351.22px;top:772.25px;font-size:25.5px;color:#000;">0</div><div class="t" style="left:58.70px;top:810.25px;font-size:25.5px;color:#0b3a1e;letter-spacing:-0.620px;">John Doe</div><div class="t" style="left:251.70px;top:810.25px;font-size:25.5px;color:#0b3a1e;letter-spacing:-0.193px;">Product B</div><div class="t" style="left:418.70px;top:810.25px;font-size:25.5px;color:#0b3a1e;letter-spacing:-0.700px;">East</div><div class="t" style="left:630.85px;top:810.25px;font-size:25.5px;color:#0b3a1e;letter-spacing:0.750px;">1/11/2023</div><div class="t" style="left:1057.22px;top:810.25px;font-size:25.5px;color:#0b3a1e;">3</div><div class="t" style="left:1260.22px;top:810.25px;font-size:25.5px;color:#0b3a1e;">0</div><div class="t" style="left:1473.42px;top:810.25px;font-size:25.5px;color:#0b3a1e;letter-spacing:0.750px;">2300</div><div class="t" style="left:1542.70px;top:810.25px;font-size:25.5px;color:#0b3a1e;letter-spacing:-1.167px;">PayPal</div><div class="t" style="left:2146.22px;top:810.25px;font-size:25.5px;color:#0b3a1e;">7</div><div class="t" style="left:2313.52px;top:810.25px;font-size:25.5px;color:#0b3a1e;letter-spacing:0.750px;">0.02</div><div class="t" style="left:58.70px;top:848.25px;font-size:25.5px;color:#000;letter-spacing:-0.392px;">Jane Smith</div><div class="t" style="left:251.70px;top:848.25px;font-size:25.5px;color:#000;letter-spacing:-0.093px;">Product C</div><div class="t" style="left:418.70px;top:848.25px;font-size:25.5px;color:#000;letter-spacing:0.357px;">West</div><div class="t" style="left:628.95px;top:848.25px;font-size:25.5px;color:#000;letter-spacing:0.750px;">1/12/2023</div><div class="t" style="left:1057.22px;top:848.25px;font-size:25.5px;color:#000;">5</div><div class="t" style="left:1222.52px;top:848.25px;font-size:25.5px;color:#000;letter-spacing:0.750px;">0.05</div><div class="t" style="left:1473.42px;top:848.25px;font-size:25.5px;color:#0b3a1e;letter-spacing:0.750px;">5000</div><div class="t" style="left:1542.70px;top:848.25px;font-size:25.5px;color:#000;letter-spacing:-0.514px;">Cash</div><div class="t" style="left:2146.22px;top:848.25px;font-size:25.5px;color:#000;">3</div><div class="t" style="left:2313.52px;top:848.25px;font-size:25.5px;color:#000;letter-spacing:0.750px;">0.01</div><div class="t" style="left:58.70px;top:886.25px;font-size:25.5px;color:#000;letter-spacing:-0.282px;">Mike Brown</div><div class="t" style="left:251.70px;top:886.25px;font-size:25.5px;color:#000;letter-spacing:-0.034px;">Product A</div><div class="t" style="left:418.70px;top:886.25px;font-size:25.5px;color:#000;letter-spacing:0.338px;">North</div><div class="t" style="left:628.95px;top:886.25px;font-size:25.5px;color:#000;letter-spacing:0.750px;">1/13/2023</div><div class="t" style="left:1057.22px;top:886.25px;font-size:25.5px;color:#000;">4</div><div class="t" style="left:1237.45px;top:886.25px;font-size:25.5px;color:#000;letter-spacing:0.750px;">0.1</div><div class="t" style="left:1473.42px;top:886.25px;font-size:25.5px;color:#0b3a1e;letter-spacing:0.750px;">3500</div><div class="t" style="left:1542.70px;top:886.25px;font-size:25.5px;color:#000;letter-spacing:0.027px;">Credit Card</div><div class="t" style="left:2146.22px;top:886.25px;font-size:25.5px;color:#000;">5</div><div class="t" style="left:2313.52px;top:886.25px;font-size:25.5px;color:#000;letter-spacing:0.750px;">0.02</div><div class="t" style="left:58.70px;top:924.25px;font-size:25.5px;color:#000;letter-spacing:-0.526px;">Lucy Green</div><div class="t" style="left:251.70px;top:924.25px;font-size:25.5px;color:#000;letter-spacing:-0.193px;">Product B</div><div class="t" style="left:418.70px;top:924.25px;font-size:25.5px;color:#000;letter-spacing:-0.046px;">South</div><div class="t" style="left:628.95px;top:924.25px;font-size:25.5px;color:#000;letter-spacing:0.750px;">1/14/2023</div><div class="t" style="left:1057.22px;top:924.25px;font-size:25.5px;color:#000;">3</div><div class="t" style="left:1237.45px;top:924.25px;font-size:25.5px;color:#000;letter-spacing:0.750px;">0.2</div><div class="t" style="left:1473.42px;top:924.25px;font-size:25.5px;color:#0b3a1e;letter-spacing:0.750px;">4000</div><div class="t" style="left:1542.70px;top:924.25px;font-size:25.5px;color:#000;letter-spacing:-1.167px;">PayPal</div><div class="t" style="left:2146.22px;top:924.25px;font-size:25.5px;color:#000;">6</div><div class="t" style="left:2313.52px;top:924.25px;font-size:25.5px;color:#000;letter-spacing:0.750px;">0.01</div><div class="t" style="left:58.70px;top:962.25px;font-size:25.5px;color:#000;letter-spacing:0.402px;">Tom White</div><div class="t" style="left:251.70px;top:962.25px;font-size:25.5px;color:#000;letter-spacing:-0.093px;">Product C</div><div class="t" style="left:418.70px;top:962.25px;font-size:25.5px;color:#000;letter-spacing:-0.700px;">East</div><div class="t" style="left:628.95px;top:962.25px;font-size:25.5px;color:#000;letter-spacing:0.750px;">1/15/2023</div><div class="t" style="left:1057.22px;top:962.25px;font-size:25.5px;color:#000;">5</div><div class="t" style="left:1260.22px;top:962.25px;font-size:25.5px;color:#000;">0</div><div class="t" style="left:1473.42px;top:962.25px;font-size:25.5px;color:#0b3a1e;letter-spacing:0.750px;">3400</div><div class="t" style="left:1542.70px;top:962.25px;font-size:25.5px;color:#000;letter-spacing:-0.514px;">Cash</div><div class="t" style="left:2146.22px;top:962.25px;font-size:25.5px;color:#000;">4</div><div class="t" style="left:2313.52px;top:962.25px;font-size:25.5px;color:#000;letter-spacing:0.750px;">0.03</div><div class="t" style="left:58.70px;top:1000.25px;font-size:25.5px;color:#000;letter-spacing:-0.620px;">John Doe</div><div class="t" style="left:251.70px;top:1000.25px;font-size:25.5px;color:#000;letter-spacing:-0.034px;">Product A</div><div class="t" style="left:418.70px;top:1000.25px;font-size:25.5px;color:#000;letter-spacing:0.357px;">West</div><div class="t" style="left:628.95px;top:1000.25px;font-size:25.5px;color:#000;letter-spacing:0.750px;">1/16/2023</div><div class="t" style="left:1057.22px;top:1000.25px;font-size:25.5px;color:#000;">5</div><div class="t" style="left:1222.52px;top:1000.25px;font-size:25.5px;color:#000;letter-spacing:0.750px;">0.15</div><div class="t" style="left:1473.42px;top:1000.25px;font-size:25.5px;color:#0b3a1e;letter-spacing:0.750px;">4700</div><div class="t" style="left:1542.70px;top:1000.25px;font-size:25.5px;color:#000;letter-spacing:0.027px;">Credit Card</div><div class="t" style="left:2146.22px;top:1000.25px;font-size:25.5px;color:#000;">2</div><div class="t" style="left:2313.52px;top:1000.25px;font-size:25.5px;color:#000;letter-spacing:0.750px;">0.04</div><div class="t" style="left:58.70px;top:1038.25px;font-size:25.5px;color:#000;letter-spacing:-0.392px;">Jane Smith</div><div class="t" style="left:251.70px;top:1038.25px;font-size:25.5px;color:#000;letter-spacing:-0.193px;">Product B</div><div class="t" style="left:418.70px;top:1038.25px;font-size:25.5px;color:#000;letter-spacing:0.338px;">North</div><div class="t" style="left:628.95px;top:1038.25px;font-size:25.5px;color:#000;letter-spacing:0.750px;">1/17/2023</div><div class="t" style="left:1057.22px;top:1038.25px;font-size:25.5px;color:#000;">4</div><div class="t" style="left:1237.45px;top:1038.25px;font-size:25.5px;color:#000;letter-spacing:0.750px;">0.1</div><div class="t" style="left:1473.42px;top:1038.25px;font-size:25.5px;color:#0b3a1e;letter-spacing:0.750px;">3900</div><div class="t" style="left:1542.70px;top:1038.25px;font-size:25.5px;color:#000;letter-spacing:-1.167px;">PayPal</div><div class="t" style="left:2146.22px;top:1038.25px;font-size:25.5px;color:#000;">3</div><div class="t" style="left:2313.52px;top:1038.25px;font-size:25.5px;color:#000;letter-spacing:0.750px;">0.02</div><div class="t" style="left:58.70px;top:1076.25px;font-size:25.5px;color:#000;letter-spacing:-0.282px;">Mike Brown</div><div class="t" style="left:251.70px;top:1076.25px;font-size:25.5px;color:#000;letter-spacing:-0.093px;">Product C</div><div class="t" style="left:418.70px;top:1076.25px;font-size:25.5px;color:#000;letter-spacing:-0.046px;">South</div><div class="t" style="left:628.95px;top:1076.25px;font-size:25.5px;color:#000;letter-spacing:0.750px;">1/18/2023</div><div class="t" style="left:1057.22px;top:1076.25px;font-size:25.5px;color:#000;">3</div><div class="t" style="left:1222.52px;top:1076.25px;font-size:25.5px;color:#000;letter-spacing:0.750px;">0.05</div><div class="t" style="left:1473.42px;top:1076.25px;font-size:25.5px;color:#0b3a1e;letter-spacing:0.750px;">2600</div><div class="t" style="left:1542.70px;top:1076.25px;font-size:25.5px;color:#000;letter-spacing:-0.514px;">Cash</div><div class="t" style="left:2146.22px;top:1076.25px;font-size:25.5px;color:#000;">7</div><div class="t" style="left:2313.52px;top:1076.25px;font-size:25.5px;color:#000;letter-spacing:0.750px;">0.03</div><div class="t" style="left:58.70px;top:1114.25px;font-size:25.5px;color:#000;letter-spacing:-0.526px;">Lucy Green</div><div class="t" style="left:251.70px;top:1114.25px;font-size:25.5px;color:#000;letter-spacing:-0.034px;">Product A</div><div class="t" style="left:418.70px;top:1114.25px;font-size:25.5px;color:#000;letter-spacing:-0.700px;">East</div><div class="t" style="left:628.95px;top:1114.25px;font-size:25.5px;color:#000;letter-spacing:0.750px;">1/19/2023</div><div class="t" style="left:1057.22px;top:1114.25px;font-size:25.5px;color:#000;">5</div><div class="t" style="left:1260.22px;top:1114.25px;font-size:25.5px;color:#000;">0</div><div class="t" style="left:1473.42px;top:1114.25px;font-size:25.5px;color:#0b3a1e;letter-spacing:0.750px;">3100</div><div class="t" style="left:1542.70px;top:1114.25px;font-size:25.5px;color:#000;letter-spacing:0.027px;">Credit Card</div><div class="t" style="left:2146.22px;top:1114.25px;font-size:25.5px;color:#000;">5</div><div class="t" style="left:2351.22px;top:1114.25px;font-size:25.5px;color:#000;">0</div><div class="t" style="left:58.70px;top:1152.25px;font-size:25.5px;color:#000;letter-spacing:0.402px;">Tom White</div><div class="t" style="left:251.70px;top:1152.25px;font-size:25.5px;color:#000;letter-spacing:-0.193px;">Product B</div><div class="t" style="left:418.70px;top:1152.25px;font-size:25.5px;color:#000;letter-spacing:0.357px;">West</div><div class="t" style="left:628.95px;top:1152.25px;font-size:25.5px;color:#000;letter-spacing:0.750px;">1/20/2023</div><div class="t" style="left:1057.22px;top:1152.25px;font-size:25.5px;color:#000;">4</div><div class="t" style="left:1222.52px;top:1152.25px;font-size:25.5px;color:#000;letter-spacing:0.750px;">0.15</div><div class="t" style="left:1473.42px;top:1152.25px;font-size:25.5px;color:#0b3a1e;letter-spacing:0.750px;">2800</div><div class="t" style="left:1542.70px;top:1152.25px;font-size:25.5px;color:#000;letter-spacing:-1.167px;">PayPal</div><div class="t" style="left:2146.22px;top:1152.25px;font-size:25.5px;color:#000;">6</div><div class="t" style="left:2313.52px;top:1152.25px;font-size:25.5px;color:#000;letter-spacing:0.750px;">0.02</div><div class="t" style="left:58.70px;top:1190.25px;font-size:25.5px;color:#000;letter-spacing:-0.620px;">John Doe</div><div class="t" style="left:251.70px;top:1190.25px;font-size:25.5px;color:#000;letter-spacing:-0.093px;">Product C</div><div class="t" style="left:418.70px;top:1190.25px;font-size:25.5px;color:#000;letter-spacing:0.338px;">North</div><div class="t" style="left:628.95px;top:1190.25px;font-size:25.5px;color:#000;letter-spacing:0.750px;">1/21/2023</div><div class="t" style="left:1057.22px;top:1190.25px;font-size:25.5px;color:#000;">2</div><div class="t" style="left:1237.45px;top:1190.25px;font-size:25.5px;color:#000;letter-spacing:0.750px;">0.1</div><div class="t" style="left:1473.42px;top:1190.25px;font-size:25.5px;color:#0b3a1e;letter-spacing:0.750px;">2200</div><div class="t" style="left:1542.70px;top:1190.25px;font-size:25.5px;color:#000;letter-spacing:-0.514px;">Cash</div><div class="t" style="left:2146.22px;top:1190.25px;font-size:25.5px;color:#000;">7</div><div class="t" style="left:2313.52px;top:1190.25px;font-size:25.5px;color:#000;letter-spacing:0.750px;">0.01</div><div class="t" style="left:58.70px;top:1228.25px;font-size:25.5px;color:#000;letter-spacing:-0.392px;">Jane Smith</div><div class="t" style="left:251.70px;top:1228.25px;font-size:25.5px;color:#000;letter-spacing:-0.034px;">Product A</div><div class="t" style="left:418.70px;top:1228.25px;font-size:25.5px;color:#000;letter-spacing:-0.046px;">South</div><div class="t" style="left:628.95px;top:1228.25px;font-size:25.5px;color:#000;letter-spacing:0.750px;">1/22/2023</div><div class="t" style="left:1057.22px;top:1228.25px;font-size:25.5px;color:#000;">5</div><div class="t" style="left:1237.45px;top:1228.25px;font-size:25.5px;color:#000;letter-spacing:0.750px;">0.2</div><div class="t" style="left:1473.42px;top:1228.25px;font-size:25.5px;color:#0b3a1e;letter-spacing:0.750px;">4000</div><div class="t" style="left:1542.70px;top:1228.25px;font-size:25.5px;color:#000;letter-spacing:0.027px;">Credit Card</div><div class="t" style="left:2146.22px;top:1228.25px;font-size:25.5px;color:#000;">3</div><div class="t" style="left:2313.52px;top:1228.25px;font-size:25.5px;color:#000;letter-spacing:0.750px;">0.01</div><div class="t" style="left:58.70px;top:1266.25px;font-size:25.5px;color:#000;letter-spacing:-0.282px;">Mike Brown</div><div class="t" style="left:251.70px;top:1266.25px;font-size:25.5px;color:#000;letter-spacing:-0.193px;">Product B</div><div class="t" style="left:418.70px;top:1266.25px;font-size:25.5px;color:#000;letter-spacing:-0.700px;">East</div><div class="t" style="left:628.95px;top:1266.25px;font-size:25.5px;color:#000;letter-spacing:0.750px;">1/23/2023</div><div class="t" style="left:1057.22px;top:1266.25px;font-size:25.5px;color:#000;">4</div><div class="t" style="left:1260.22px;top:1266.25px;font-size:25.5px;color:#000;">0</div><div class="t" style="left:1473.42px;top:1266.25px;font-size:25.5px;color:#0b3a1e;letter-spacing:0.750px;">3300</div><div class="t" style="left:1542.70px;top:1266.25px;font-size:25.5px;color:#000;letter-spacing:-1.167px;">PayPal</div><div class="t" style="left:2146.22px;top:1266.25px;font-size:25.5px;color:#000;">5</div><div class="t" style="left:2313.52px;top:1266.25px;font-size:25.5px;color:#000;letter-spacing:0.750px;">0.04</div><div class="t" style="left:58.70px;top:1304.25px;font-size:25.5px;color:#000;letter-spacing:-0.526px;">Lucy Green</div><div class="t" style="left:251.70px;top:1304.25px;font-size:25.5px;color:#000;letter-spacing:-0.093px;">Product C</div><div class="t" style="left:418.70px;top:1304.25px;font-size:25.5px;color:#000;letter-spacing:0.357px;">West</div><div class="t" style="left:628.95px;top:1304.25px;font-size:25.5px;color:#000;letter-spacing:0.750px;">1/24/2023</div><div class="t" style="left:1057.22px;top:1304.25px;font-size:25.5px;color:#000;">5</div><div class="t" style="left:1222.52px;top:1304.25px;font-size:25.5px;color:#000;letter-spacing:0.750px;">0.05</div><div class="t" style="left:1473.42px;top:1304.25px;font-size:25.5px;color:#0b3a1e;letter-spacing:0.750px;">4500</div><div class="t" style="left:1542.70px;top:1304.25px;font-size:25.5px;color:#000;letter-spacing:-0.514px;">Cash</div><div class="t" style="left:2146.22px;top:1304.25px;font-size:25.5px;color:#000;">2</div><div class="t" style="left:2313.52px;top:1304.25px;font-size:25.5px;color:#000;letter-spacing:0.750px;">0.01</div><div class="t" style="left:58.70px;top:1342.25px;font-size:25.5px;color:#000;letter-spacing:0.402px;">Tom White</div><div class="t" style="left:251.70px;top:1342.25px;font-size:25.5px;color:#000;letter-spacing:-0.034px;">Product A</div><div class="t" style="left:418.70px;top:1342.25px;font-size:25.5px;color:#000;letter-spacing:0.338px;">North</div><div class="t" style="left:628.95px;top:1342.25px;font-size:25.5px;color:#000;letter-spacing:0.750px;">1/25/2023</div><div class="t" style="left:1057.22px;top:1342.25px;font-size:25.5px;color:#000;">5</div><div class="t" style="left:1222.52px;top:1342.25px;font-size:25.5px;color:#000;letter-spacing:0.750px;">0.15</div><div class="t" style="left:1473.42px;top:1342.25px;font-size:25.5px;color:#0b3a1e;letter-spacing:0.750px;">5000</div><div class="t" style="left:1542.70px;top:1342.25px;font-size:25.5px;color:#000;letter-spacing:0.027px;">Credit Card</div><div class="t" style="left:2146.22px;top:1342.25px;font-size:25.5px;color:#000;">4</div><div class="t" style="left:2313.52px;top:1342.25px;font-size:25.5px;color:#000;letter-spacing:0.750px;">0.03</div><div class="t" style="left:58.70px;top:1380.25px;font-size:25.5px;color:#000;letter-spacing:-0.620px;">John Doe</div><div class="t" style="left:251.70px;top:1380.25px;font-size:25.5px;color:#000;letter-spacing:-0.193px;">Product B</div><div class="t" style="left:418.70px;top:1380.25px;font-size:25.5px;color:#000;letter-spacing:-0.046px;">South</div><div class="t" style="left:628.95px;top:1380.25px;font-size:25.5px;color:#000;letter-spacing:0.750px;">1/26/2023</div><div class="t" style="left:1057.22px;top:1380.25px;font-size:25.5px;color:#000;">3</div><div class="t" style="left:1237.45px;top:1380.25px;font-size:25.5px;color:#000;letter-spacing:0.750px;">0.1</div><div class="t" style="left:1473.42px;top:1380.25px;font-size:25.5px;color:#0b3a1e;letter-spacing:0.750px;">2800</div><div class="t" style="left:1542.70px;top:1380.25px;font-size:25.5px;color:#000;letter-spacing:-1.167px;">PayPal</div><div class="t" style="left:2146.22px;top:1380.25px;font-size:25.5px;color:#000;">6</div><div class="t" style="left:2313.52px;top:1380.25px;font-size:25.5px;color:#000;letter-spacing:0.750px;">0.02</div><div class="t" style="left:58.70px;top:1418.25px;font-size:25.5px;color:#000;letter-spacing:-0.392px;">Jane Smith</div><div class="t" style="left:251.70px;top:1418.25px;font-size:25.5px;color:#000;letter-spacing:-0.093px;">Product C</div><div class="t" style="left:418.70px;top:1418.25px;font-size:25.5px;color:#000;letter-spacing:-0.700px;">East</div><div class="t" style="left:628.95px;top:1418.25px;font-size:25.5px;color:#000;letter-spacing:0.750px;">1/27/2023</div><div class="t" style="left:1057.22px;top:1418.25px;font-size:25.5px;color:#000;">4</div><div class="t" style="left:1237.45px;top:1418.25px;font-size:25.5px;color:#000;letter-spacing:0.750px;">0.2</div><div class="t" style="left:1473.42px;top:1418.25px;font-size:25.5px;color:#0b3a1e;letter-spacing:0.750px;">3900</div><div class="t" style="left:1542.70px;top:1418.25px;font-size:25.5px;color:#000;letter-spacing:-0.514px;">Cash</div><div class="t" style="left:2146.22px;top:1418.25px;font-size:25.5px;color:#000;">5</div><div class="t" style="left:2313.52px;top:1418.25px;font-size:25.5px;color:#000;letter-spacing:0.750px;">0.01</div><div class="t" style="left:58.70px;top:1456.25px;font-size:25.5px;color:#000;letter-spacing:-0.282px;">Mike Brown</div><div class="t" style="left:251.70px;top:1456.25px;font-size:25.5px;color:#000;letter-spacing:-0.034px;">Product A</div><div class="t" style="left:418.70px;top:1456.25px;font-size:25.5px;color:#000;letter-spacing:0.357px;">West</div><div class="t" style="left:628.95px;top:1456.25px;font-size:25.5px;color:#000;letter-spacing:0.750px;">1/28/2023</div><div class="t" style="left:1057.22px;top:1456.25px;font-size:25.5px;color:#000;">4</div><div class="t" style="left:1260.22px;top:1456.25px;font-size:25.5px;color:#000;">0</div><div class="t" style="left:1473.42px;top:1456.25px;font-size:25.5px;color:#0b3a1e;letter-spacing:0.750px;">3200</div><div class="t" style="left:1542.70px;top:1456.25px;font-size:25.5px;color:#000;letter-spacing:0.027px;">Credit Card</div><div class="t" style="left:2146.22px;top:1456.25px;font-size:25.5px;color:#000;">3</div><div class="t" style="left:2313.52px;top:1456.25px;font-size:25.5px;color:#000;letter-spacing:0.750px;">0.04</div><div class="t" style="left:58.70px;top:1494.25px;font-size:25.5px;color:#000;letter-spacing:-0.526px;">Lucy Green</div><div class="t" style="left:251.70px;top:1494.25px;font-size:25.5px;color:#000;letter-spacing:-0.193px;">Product B</div><div class="t" style="left:418.70px;top:1494.25px;font-size:25.5px;color:#000;letter-spacing:0.338px;">North</div><div class="t" style="left:628.95px;top:1494.25px;font-size:25.5px;color:#000;letter-spacing:0.750px;">1/29/2023</div><div class="t" style="left:1057.22px;top:1494.25px;font-size:25.5px;color:#000;">3</div><div class="t" style="left:1222.52px;top:1494.25px;font-size:25.5px;color:#000;letter-spacing:0.750px;">0.05</div><div class="t" style="left:1473.42px;top:1494.25px;font-size:25.5px;color:#0b3a1e;letter-spacing:0.750px;">3700</div><div class="t" style="left:1542.70px;top:1494.25px;font-size:25.5px;color:#000;letter-spacing:-1.167px;">PayPal</div><div class="t" style="left:2146.22px;top:1494.25px;font-size:25.5px;color:#000;">5</div><div class="t" style="left:2313.52px;top:1494.25px;font-size:25.5px;color:#000;letter-spacing:0.750px;">0.02</div><div class="t" style="left:58.70px;top:1532.25px;font-size:25.5px;color:#000;letter-spacing:0.402px;">Tom White</div><div class="t" style="left:251.70px;top:1532.25px;font-size:25.5px;color:#000;letter-spacing:-0.093px;">Product C</div><div class="t" style="left:418.70px;top:1532.25px;font-size:25.5px;color:#000;letter-spacing:-0.046px;">South</div><div class="t" style="left:628.95px;top:1532.25px;font-size:25.5px;color:#000;letter-spacing:0.750px;">1/30/2023</div><div class="t" style="left:1057.22px;top:1532.25px;font-size:25.5px;color:#000;">5</div><div class="t" style="left:1237.45px;top:1532.25px;font-size:25.5px;color:#000;letter-spacing:0.750px;">0.1</div><div class="t" style="left:1473.42px;top:1532.25px;font-size:25.5px;color:#0b3a1e;letter-spacing:0.750px;">2400</div><div class="t" style="left:1542.70px;top:1532.25px;font-size:25.5px;color:#000;letter-spacing:-0.514px;">Cash</div><div class="t" style="left:2146.22px;top:1532.25px;font-size:25.5px;color:#000;">6</div><div class="t" style="left:2313.52px;top:1532.25px;font-size:25.5px;color:#000;letter-spacing:0.750px;">0.01</div><div style="position:absolute;left:1277px;top:799px;width:264px;height:43px;border:3.7px solid #37704a;box-sizing:border-box;background:#fff;"></div><div class="t" style="left:1473.42px;top:810.25px;font-size:25.5px;color:#000;letter-spacing:0.750px;">2300</div><div style="position:absolute;left:1531.5px;top:833.5px;width:11px;height:11px;background:#fff;"></div><div style="position:absolute;left:1533px;top:835px;width:8px;height:8px;background:#37704a;"></div>
</body></html>
